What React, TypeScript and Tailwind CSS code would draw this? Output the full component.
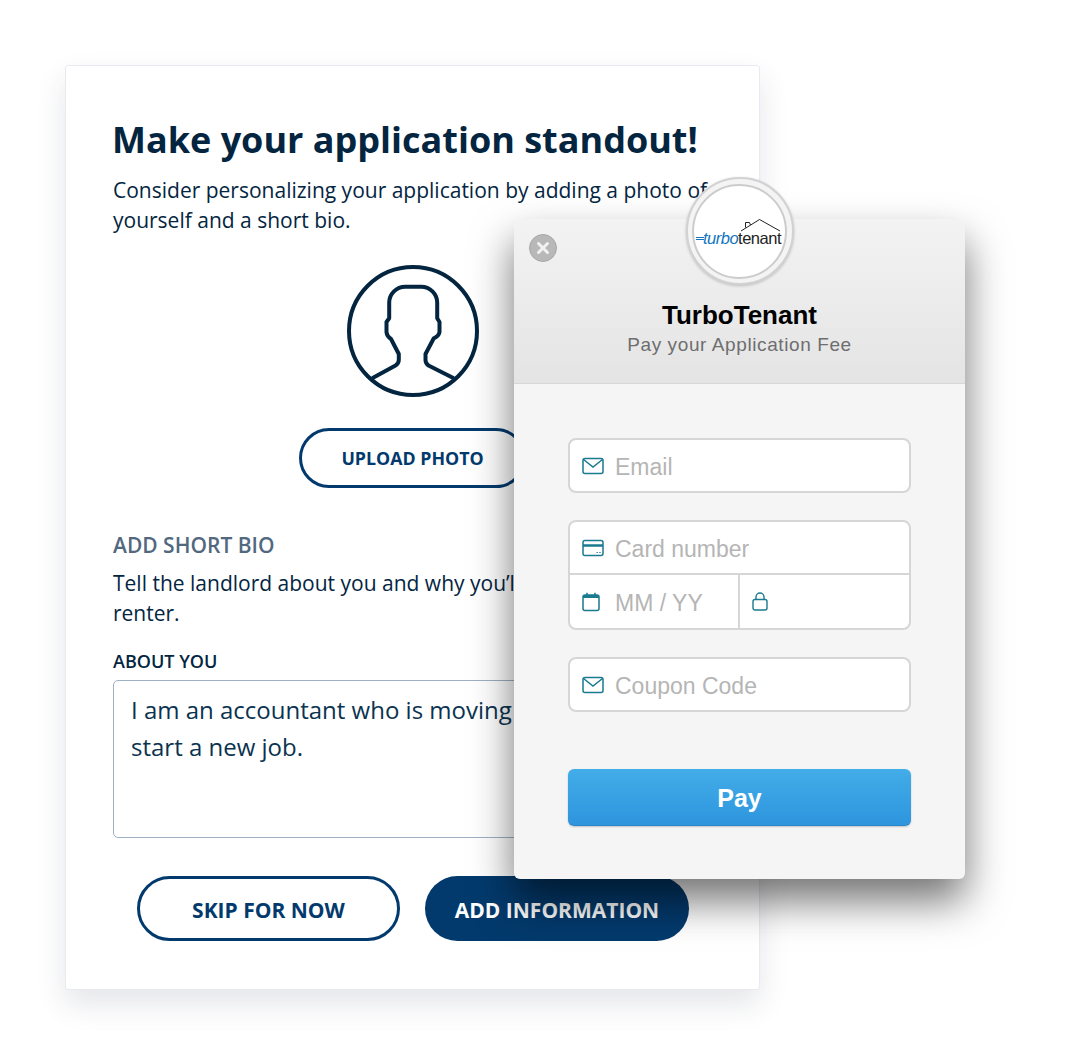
import React from "react";

const sans = "font-['Open_Sans',sans-serif]";
const helv = "font-['Liberation_Sans',Arial,sans-serif]";

const MailIcon = () => (
  <svg width="22" height="18" viewBox="0 0 22 18" fill="none" stroke="#1a7a8f" strokeWidth="1.5">
    <rect x="1" y="1.5" width="20" height="15" rx="2" />
    <path d="M1.5 2.5 L11 10 L20.5 2.5" />
  </svg>
);

const CardIcon = () => (
  <svg width="22" height="18" viewBox="0 0 22 18" fill="none" stroke="#1a7a8f" strokeWidth="1.5">
    <rect x="1" y="1.5" width="20" height="15" rx="2" />
    <path d="M1 6.5 H21" strokeWidth="2.5" />
    <path d="M14.5 13.5 H15.8 M17.3 13.5 H18.6" strokeWidth="1.2" />
  </svg>
);

const CalendarIcon = () => (
  <svg width="18" height="20" viewBox="0 0 18 20" fill="none" stroke="#1a7a8f" strokeWidth="1.5">
    <rect x="1" y="3" width="16" height="15.5" rx="2" />
    <path d="M1 4.5 H17" strokeWidth="3" />
    <path d="M5 0.8 V3 M13 0.8 V3" />
  </svg>
);

const LockIcon = () => (
  <svg width="16" height="19" viewBox="0 0 16 19" fill="none" stroke="#1a7a8f" strokeWidth="1.4">
    <rect x="1" y="7.5" width="14" height="10.5" rx="2" />
    <path d="M4 7.5 V5 A4 4 0 0 1 12 5 V7.5" />
  </svg>
);

const Avatar = () => (
  <svg width="132" height="132" viewBox="0 0 132 132" fill="none" stroke="#04253f" strokeWidth="4" strokeLinejoin="round">
    <circle cx="66" cy="66" r="64" />
    <path
      transform="translate(-0.5 0)"
      d="M25.7 113.3 L49 100.5 Q52.3 98.5 52.3 95 L52.3 89 L44.500 74 Q40.500 71.500 40 67.3 L40 57 L42.7 53.3 L42.7 37.500 A16 16 0 0 1 58.700 21.700 L74.700 21.700 A16 16 0 0 1 90.700 37.500 L90.7 53.3 L93 57 L93 67.3 Q92 71.500 87.300 73.300 L79 89 L79 95 Q79 98.500 82 100.500 L107.3 113.3"
    />
  </svg>
);

const Field = ({ icon, label, className = "" }: { icon: React.ReactNode; label?: string; className?: string }) => (
  <div className={`flex items-center ${className}`}>
    <div className="w-[45px] pl-3 flex items-center">{icon}</div>
    {label && <span className="pt-[3px] text-[23px] text-[#b5b5b5]">{label}</span>}
  </div>
);

const Logo = () => (
  <div className="absolute left-1/2 top-[-42px] -translate-x-1/2 w-[108px] h-[108px] rounded-full bg-[#f4f4f4] border-2 border-[#d2d2d2] flex items-center justify-center shadow-[0_1px_3px_rgba(0,0,0,0.2)]">
    <div className="relative w-[95px] h-[95px] rounded-full bg-white border-2 border-[#cccccc] overflow-hidden">
      <svg className="absolute left-[46px] top-[32px]" width="42" height="20" viewBox="0 0 42 20" fill="none" stroke="#222" strokeWidth="1">
        <path d="M1 13 L19.500 1.500 L40 13" />
        <path d="M5.500 9.500 V4.500 H9.500 L10.500 7" />
      </svg>
      <span className="absolute left-[2px] top-[51px] h-[3px] w-[8px] border-y border-[#1174bd]"></span>
      <div className={`absolute left-[9px] top-[43px] text-[16.500px] leading-[18px] tracking-[-0.5px] whitespace-nowrap ${helv}`}>
        <span className="italic text-[#1174bd]">turbo</span>
        <span className="text-[#222]">tenant</span>
      </div>
    </div>
  </div>
);

const Modal = () => (
  <div className={`absolute left-[514px] top-[219px] w-[451px] h-[660px] rounded-md bg-[#f5f5f5] shadow-[0_22px_42px_rgba(0,0,0,0.55)] ${helv}`}>
    <Logo />
    <div className="h-[165px] rounded-t-md bg-gradient-to-b from-[#f3f3f3] to-[#e4e4e5] border-b border-[#d7d7d7] flex flex-col items-center">
      <div className="self-start ml-[15px] mt-[15px] w-[28px] h-[28px] rounded-full bg-[#b8b8b8] border border-[#a8a8a8] flex items-center justify-center">
        <svg width="14" height="14" viewBox="0 0 14 14" stroke="#f2f2f2" strokeWidth="3" strokeLinecap="round">
          <path d="M2.500 2.500 L11.500 11.500 M11.500 2.500 L2.500 11.500" />
        </svg>
      </div>
      <div className="mt-[38px] text-[26px] leading-[30px] font-bold text-black">TurboTenant</div>
      <div className="mt-[2px] text-[19px] leading-[26px] tracking-[0.6px] text-[#6e6e6e]">Pay your Application Fee</div>
    </div>
    <div className="px-[54px] pt-[54px] flex flex-col">
      <div className="bg-white border-2 border-[#d6d6d6] rounded-lg">
        <Field icon={<MailIcon />} label="Email" className="h-[51px]" />
      </div>
      <div className="mt-[27px] bg-white border-2 border-[#d6d6d6] rounded-lg">
        <Field icon={<CardIcon />} label="Card number" className="h-[53px] border-b-2 border-[#d6d6d6]" />
        <div className="flex h-[53px]">
          <Field icon={<CalendarIcon />} label="MM / YY" className="w-[170px] border-r-2 border-[#d6d6d6]" />
          <Field icon={<LockIcon />} />
        </div>
      </div>
      <div className="mt-[27px] bg-white border-2 border-[#d6d6d6] rounded-lg">
        <Field icon={<MailIcon />} label="Coupon Code" className="h-[51px]" />
      </div>
      <button className="mt-[57px] h-[57px] pt-[3px] rounded-md bg-gradient-to-b from-[#42ade8] to-[#2e95de] border-b border-[#2a86c8] shadow-[0_1px_2px_rgba(0,0,0,0.2)] text-white text-[25px] font-bold">
        Pay
      </button>
    </div>
  </div>
);

export default function App() {
  return (
    <div className="relative w-[1071px] h-[1055px] bg-white overflow-hidden">
      <div className="pl-[65px] pt-[65px]">
        <div className={`w-[695px] h-[925px] bg-white border border-[#e8eaef] rounded-[3px] shadow-[0_14px_30px_rgba(30,40,70,0.12)] pl-[47px] pr-[46px] pt-[49px] text-[#04253f] ${sans}`}>
          <h1 className="-ml-[1px] text-[36px] leading-[50px] font-bold whitespace-nowrap">Make your application standout!</h1>
          <p className="mt-[10px] text-[21px] leading-[30px] whitespace-nowrap">
            Consider personalizing your application by adding a photo of
            <br />
            yourself and a short bio.
          </p>
          <div className="mt-[30px] pr-[1px] flex flex-col items-center">
            <Avatar />
            <button className="mt-[31px] w-[227px] h-[60px] rounded-full border-[3px] border-[#033a6d] text-[#033a6d] text-[17.800px] font-bold">
              UPLOAD PHOTO
            </button>
          </div>
          <h2 className="mt-[42px] text-[21px] leading-[30px] font-semibold text-[#52687f]">ADD SHORT BIO</h2>
          <p className="mt-[8px] text-[21px] leading-[30px] whitespace-nowrap">
            Tell the landlord about you and why you’ll be a great
            <br />
            renter.
          </p>
          <div className="mt-[21px] text-[18px] leading-[24px] font-semibold">ABOUT YOU</div>
          <div className="mt-[7px] h-[158px] rounded-[5px] border border-[#9fb0c4] px-[17px] pt-[10px] text-[24px] leading-[37px] text-[#0b3350]">
            I am an accountant who is moving here to
            <br />
            start a new job.
          </div>
          <div className="mt-[38px] flex justify-center gap-[25px]">
            <button className="w-[263px] h-[65px] pt-[4px] rounded-full border-[3px] border-[#033a6d] text-[#033a6d] text-[21px] font-bold">
              SKIP FOR NOW
            </button>
            <button className="w-[264px] h-[65px] pt-[4px] rounded-full bg-[#033a6d] text-white text-[21px] font-bold">
              ADD INFORMATION
            </button>
          </div>
        </div>
      </div>
      <Modal />
    </div>
  );
}
